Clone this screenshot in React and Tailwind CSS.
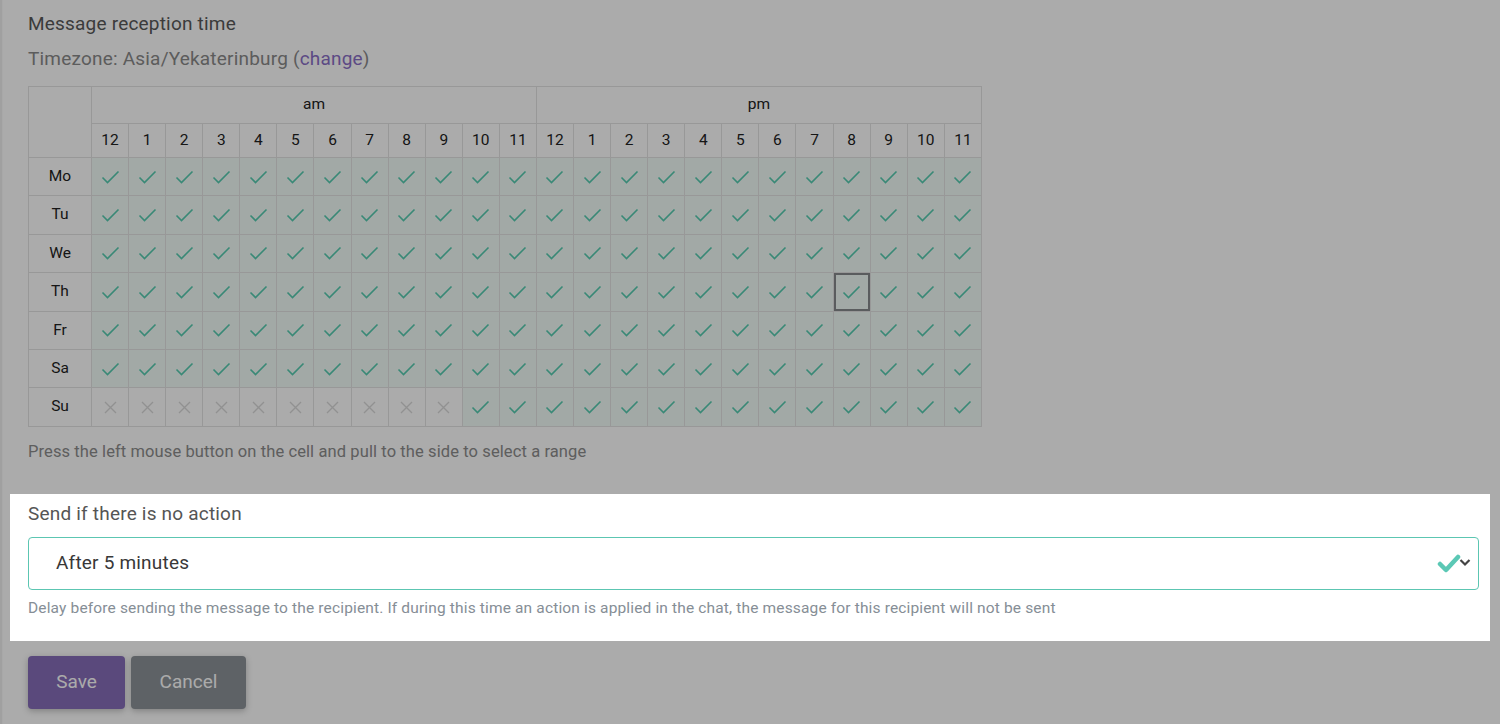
import React from 'react';

const HOURS = [ 12, 1, 2, 3, 4, 5, 6, 7, 8, 9, 10, 11 ];
const DAYS = [ 'Mo', 'Tu', 'We', 'Th', 'Fr', 'Sa', 'Su' ];

// Sunday morning is off until 10am, the rest is on.
const isOn = ( day, hour ) => ! ( day === 'Su' && hour < 10 );

const Check = () => (
	<svg width="19" height="14" viewBox="0 0 19 14" fill="none" className="mx-auto block">
		<polyline points="1.5,7.5 6.5,12.5 17.5,1.5" stroke="#56ccb0" strokeWidth="1.6" strokeLinejoin="miter" />
	</svg>
);

const Cross = () => (
	<svg width="13" height="13" viewBox="0 0 13 13" fill="none" className="mx-auto block">
		<path d="M1 1 L12 12 M12 1 L1 12" stroke="#d8d8d8" strokeWidth="1.3" />
	</svg>
);

const ScheduleGrid = () => {
	return (
		<table className="table-fixed border-collapse w-[954px] text-[15.5px] text-[#222] mt-[15px]">
			<colgroup>
				<col className="w-[63px]" />
				{ Array.from( { length: 24 } ).map( ( _, index ) => <col key={ `col-${ index }` } /> ) }
			</colgroup>
			<thead>
				<tr className="h-[37px]">
					<th rowSpan={ 2 } className="border border-[#e3e3e3]" />
					<th colSpan={ 12 } className="border border-[#e3e3e3] font-normal">am</th>
					<th colSpan={ 12 } className="border border-[#e3e3e3] font-normal">pm</th>
				</tr>
				<tr className="h-[34px]">
					{ [ ...HOURS, ...HOURS ].map( ( hour, index ) => (
						<th key={ `hour-${ index }` } className="border border-[#e3e3e3] font-normal">{ hour }</th>
					) ) }
				</tr>
			</thead>
			<tbody>
				{ DAYS.map( ( day ) => (
					<tr key={ day } className="h-[38.4px]">
						<td className="border border-[#e3e3e3] text-center">{ day }</td>
						{ Array.from( { length: 24 } ).map( ( _, hour ) => {
							const on = isOn( day, hour );
							const focused = day === 'Th' && hour === 20;
							return (
								<td
									key={ `${ day }-${ hour }` }
									className={ on
										? ( focused
											? 'border border-[#e3e3e3] bg-[#f2fcf8] shadow-[inset_0_0_0_2px_#86898d]'
											: 'border border-[#e3e3e3] bg-[#f2fcf8]' )
										: 'border border-[#e3e3e3]' }
								>
									{ on ? <Check /> : <Cross /> }
								</td>
							);
						} ) }
					</tr>
				) ) }
			</tbody>
		</table>
	);
};

export default function App() {
	return (
		<div className="min-h-screen bg-white flex font-['Roboto',sans-serif]">
			<div className="w-[3px] shrink-0 bg-[#efefef] border-r border-[#fbfbfb]" />
			<div className="flex-1 pl-[7px] pr-[10px]">
				<div className="pl-[18px] pt-[12px]">
					<h3 className="text-[19px] tracking-[0.2px] leading-6 text-[#595959]">Message reception time</h3>
					<div className="mt-[11px] text-[19px] tracking-[0.2px] leading-6 text-[#8a8a8a]">
						Timezone: Asia/Yekaterinburg (<a href="#" className="text-[#8a6fc6]">change</a>)
					</div>
					<ScheduleGrid />
					<p className="mt-[14px] text-[16.5px] tracking-[0.1px] leading-[22px] text-[#8c8c8c]">
						Press the left mouse button on the cell and pull to the side to select a range
					</p>
				</div>

				<section className="relative z-10 mt-[31px] bg-white pl-[18px] pr-[11px] pt-[8px] pb-[23px] shadow-[0_0_0_9999px_rgba(0,0,0,0.33)]">
					<label className="block text-[19px] tracking-[0.2px] leading-6 text-[#555]">Send if there is no action</label>
					<div className="mt-[11px] h-[53px] flex items-center rounded-[4px] border border-[#5cc6b2] pl-[27px] pr-[3px]">
						<span className="flex-1 text-[19px] tracking-[0.2px] text-[#383838]">After 5 minutes</span>
						<svg width="38" height="24" viewBox="0 0 38 24" fill="none">
							<path d="M3 13 L9 19 L21 6" stroke="#5bc8b5" strokeWidth="4.5" strokeLinecap="round" strokeLinejoin="round" />
							<path d="M23.5 9 L28 13.5 L32.5 9" stroke="#444" strokeWidth="2.2" />
						</svg>
					</div>
					<p className="mt-[8px] text-[15.5px] tracking-[0.15px] leading-5 text-[#868e96]">
						Delay before sending the message to the recipient. If during this time an action is applied in the chat, the message for this recipient will not be sent
					</p>
				</section>

				<div className="mt-[15px] ml-[18px] flex gap-[6px]">
					<button className="h-[53px] w-[97px] rounded-[4px] bg-[#866eb9] text-[19px] text-white shadow-[0_2px_6px_rgba(0,0,0,0.25)]">Save</button>
					<button className="h-[53px] w-[115px] rounded-[4px] bg-[#8c9298] text-[19px] text-white shadow-[0_2px_6px_rgba(0,0,0,0.25)]">Cancel</button>
				</div>
			</div>
		</div>
	);
}
